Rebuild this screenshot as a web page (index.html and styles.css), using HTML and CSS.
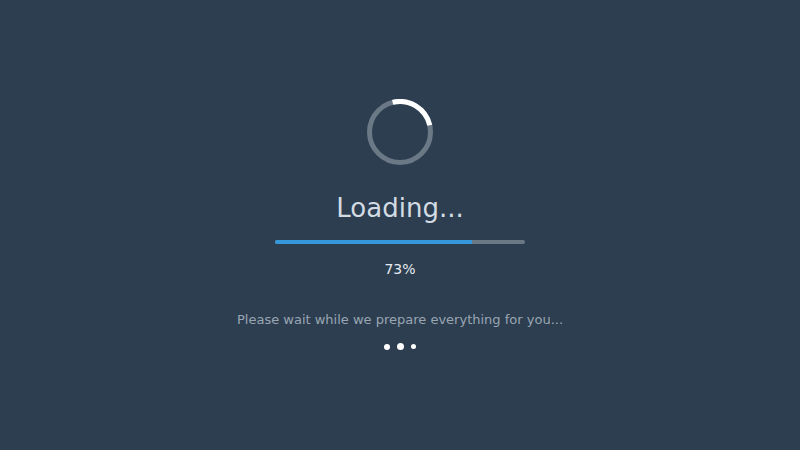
FILE: index.html
```html
<!DOCTYPE html>
<html>
<head>
<meta charset="utf-8">
<link rel="stylesheet" href="styles.css">
</head>
<body>
<div class="loader">
  <svg class="spinner" width="66" height="66" viewBox="0 0 66 66">
    <circle class="track" cx="33" cy="33" r="30.5"/>
    <circle class="arc" cx="33" cy="33" r="30.5" transform="rotate(-104 33 33)"/>
  </svg>
  <h1 class="title">Loading...</h1>
  <div class="bar"><div class="fill" style="width: 78.8%"></div></div>
  <div class="percent">73%</div>
  <p class="message">Please wait while we prepare everything for you...</p>
  <div class="dots">
    <span class="dot d1"></span>
    <span class="dot d2"></span>
    <span class="dot d3"></span>
  </div>
</div>
</body>
</html>
```
FILE: styles.css
```css
html, body {
  margin: 0;
  padding: 0;
}
body {
  width: 800px;
  height: 450px;
  background: #2c3e50;
  font-family: "DejaVu Sans", "Noto Sans", sans-serif;
  overflow: hidden;
}
.loader {
  display: flex;
  flex-direction: column;
  align-items: center;
  padding-top: 99px;
}
.spinner {
  display: block;
}
.track {
  fill: none;
  stroke: #6b7885;
  stroke-width: 5;
}
.arc {
  fill: none;
  stroke: #ffffff;
  stroke-width: 5;
  stroke-dasharray: 48.5 200;
}
.title {
  margin: 26px 0 0;
  font-size: 26px;
  font-weight: 400;
  line-height: 34px;
  color: #d3dbe3;
}
.bar {
  margin-top: 15px;
  width: 250px;
  height: 4px;
  border-radius: 2px;
  background: #6b7885;
  overflow: hidden;
}
.fill {
  height: 100%;
  background: #3498db;
}
.percent {
  margin-top: 16px;
  font-size: 14px;
  line-height: 18px;
  color: #e6ebf0;
}
.message {
  margin: 33px 0 0;
  font-size: 13px;
  line-height: 18px;
  color: #9aa6b3;
}
.dots {
  margin-top: 14px;
  display: flex;
  align-items: center;
  gap: 7px;
}
.dot {
  display: block;
  border-radius: 50%;
  background: #ffffff;
}
.d1 { width: 6px; height: 6px; }
.d2 { width: 7px; height: 7px; }
.d3 { width: 5px; height: 5px; }
```
